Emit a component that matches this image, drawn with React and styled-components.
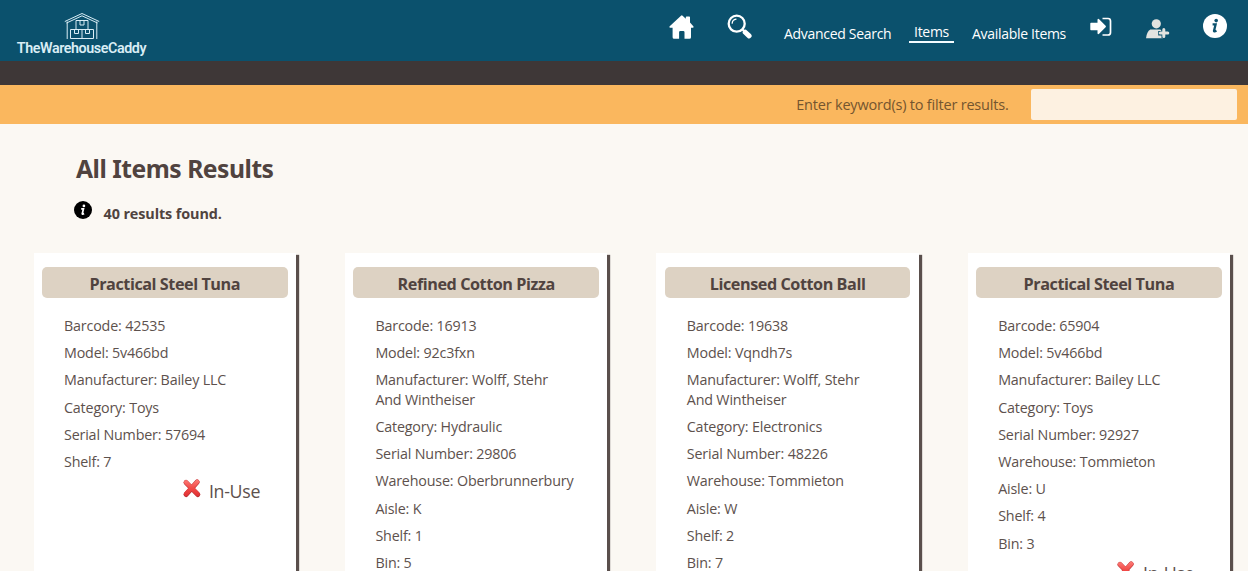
import React from "react";
import styled, { createGlobalStyle } from "styled-components";

const Global = createGlobalStyle`
  * { box-sizing: border-box; }
  html, body { margin: 0; height: 100%; overflow: hidden; }
  body {
    background: #fbf8f3;
    color: #50433f;
    font-family: "Open Sans", "Noto Sans", sans-serif;
  }
  #root { height: 100%; }
  svg { display: block; flex: none; }
`;

const Page = styled.div`
  height: 100%;
  overflow: hidden;
`;

const Header = styled.header`
  display: flex;
  justify-content: space-between;
  height: 61px;
  padding-left: 16.5px;
  background: #0b516d;
  color: #fff;
`;

const Logo = styled.a`
  display: flex;
  flex-direction: column;
  align-items: center;
  width: 130px;
  padding-top: 12px;
  color: #d9edf5;
`;

const LogoText = styled.span`
  font: 600 14.3px/17px Roboto, sans-serif;
  letter-spacing: -0.42px;
  white-space: nowrap;
`;

const Nav = styled.nav`
  display: flex;
  align-items: flex-start;
`;

const IconLink = styled.a`
  display: flex;
  margin: ${(p) => p.$top}px ${(p) => p.$right}px 0 0;
  color: ${(p) => (p.$muted ? "#e3e3e0" : "#fff")};
`;

const NavLink = styled.a`
  width: ${(p) => p.$width}px;
  height: 21px;
  margin: ${(p) => (p.$active ? 22 : 24)}px ${(p) => p.$right}px 0 0;
  border-bottom: ${(p) => (p.$active ? "2px solid #f4fbff" : "0")};
  font-size: 14px;
  line-height: 19px;
  letter-spacing: -0.3px;
  text-align: center;
  white-space: nowrap;
`;

const DarkBar = styled.div`
  height: 24px;
  background: #3e3737;
`;

const FilterBar = styled.div`
  display: flex;
  align-items: center;
  justify-content: flex-end;
  height: 39px;
  padding-right: 11px;
  background: #fab75e;
`;

const FilterLabel = styled.label`
  margin-right: 22.5px;
  color: #74552f;
  font-size: 14.5px;
  line-height: 20px;
  letter-spacing: -0.2px;
`;

const FilterInput = styled.input`
  width: 206px;
  height: 31px;
  border: 0;
  border-radius: 2px;
  background: #fdf1e1;
`;

const Title = styled.h1`
  margin: 28px 0 0 76px;
  font: 700 24.7px/34px "Noto Sans", sans-serif;
  letter-spacing: -0.5px;
`;

const Summary = styled.div`
  display: flex;
  align-items: flex-start;
  height: 67px;
  margin-left: 74px;
  padding-top: 15px;
`;

const Count = styled.p`
  margin: 3px 0 0 11.500px;
  font: 700 14.4px/20px "Open Sans", sans-serif;
  letter-spacing: -0.1px;
`;

const Grid = styled.main`
  display: grid;
  grid-template-columns: repeat(4, 262.4px);
  column-gap: 49px;
  padding-left: 33.6px;
`;

const Card = styled.article`
  height: 400px;
  padding: 14px 8.4px 0;
  background: #fff;
  box-shadow: 3px 2px 1px #5a4f4c;
`;

const CardTitle = styled.h2`
  height: 31px;
  margin: 0 0 18px;
  border-radius: 5px;
  background: #ddd2c3;
  font: 700 16.2px/34px "Open Sans", sans-serif;
  letter-spacing: -0.44px;
  text-align: center;
`;

const Field = styled.p`
  margin: 0 10px 7.65px 22px;
  color: #5d514d;
  font-size: 14.3px;
  line-height: 19.55px;
  letter-spacing: -0.17px;
  white-space: pre-line;
`;

const Status = styled.div`
  display: flex;
  justify-content: flex-end;
  gap: 7px;
  margin: -1px 27.5px 0 0;
  color: #5d514d;
  font-size: 17.8px;
  line-height: 26px;
  letter-spacing: -0.3px;
`;

const Warehouse = () => (
  <svg width="36" height="28" viewBox="0 0 36 28" fill="none" stroke="currentColor">
    <path d="M3.200 27V9.500M32.800 27V9.500M.8 9.500 18 1.500l17.200 8M2.500 11 18 3.800 33.500 11" />
    <path d="M12 17.500v-9h12v9M6.500 26.500v-9h23v9zM18 17.500v9M16 8.500v4.500h4V8.500M10.500 17.500v4h4v-4M21.500 17.500v4h4v-4" />
  </svg>
);

const Home = () => (
  <svg width="25" height="24" viewBox="0 0 25 24" fill="currentColor">
    <path d="M12 .7q.8-.7 1.600 0l3.200 3V2.300q0-.8.8-.8h2.600q.8 0 .8.800v5.300l3.300 3.600q.9 1.300-.6 1.600H22v9.400q0 1.500-1.500 1.500h-5v-6.500q0-1.200-1.200-1.200h-3q-1.200 0-1.200 1.200v6.500h-5q-1.500 0-1.500-1.500v-9.400H1.300q-1.500-.3-.6-1.600z" />
  </svg>
);

const Search = () => (
  <svg width="25" height="25" viewBox="0 0 25 25" fill="none" stroke="currentColor" strokeLinecap="round">
    <circle cx="9.700" cy="9.700" r="8" strokeWidth="2.300" />
    <path d="M5.200 9.200a4.500 4.500 0 0 1 3.800-4" strokeWidth="1.300" />
    <path d="m15.500 15.500 2 2" strokeWidth="2" />
    <path d="m18.200 18.200 3.900 3.700" strokeWidth="5" />
  </svg>
);

const SignIn = () => (
  <svg width="22" height="20" viewBox="0 0 22 20" fill="currentColor">
    <path d="M1 5.800H7.500V2.800q.3-1.500 1.600-.6l6.500 6.500q.8.800 0 1.600L9.100 16.800q-1.300.9-1.600-.6V13.200H1Q.3 13.200.3 12.500v-6Q.3 5.800 1 5.800Z" />
    <path d="M12.500 1.500H18q2.500 0 2.500 2.500v11.500q0 2.500-2.500 2.500h-5.500" fill="none" stroke="currentColor" strokeWidth="1.700" />
  </svg>
);

const AddUser = () => (
  <svg width="24" height="20" viewBox="0 0 24 20">
    <circle cx="10.300" cy="4.800" r="4.600" fill="currentColor" />
    <path d="M0 19.300q.8-6.800 4.300-8.800h10q2.200 1.500 2.700 4v4.800z" fill="currentColor" />
    <path d="M17.800 8.600v10.700M12.200 14.200h10.600" stroke="#0b516d" strokeWidth="4.600" />
    <path d="M17.800 10.600v7M14.300 14.100h7.500" stroke="currentColor" strokeWidth="3" strokeLinecap="round" />
  </svg>
);

const Info = ({ size, fill, ink }) => (
  <svg width={size} height={size} viewBox="0 0 24 24">
    <circle cx="12" cy="12" r="12" fill={fill} />
    <circle cx="13.200" cy="6.600" r="1.800" fill={ink} />
    <path d="M9.600 10.400h3l-1.600 6.600q0 .9 2.500-.2" stroke={ink} strokeWidth="2.300" fill="none" />
  </svg>
);

const Cross = () => (
  <svg width="20" height="21" viewBox="0 0 20 21" fill="none" strokeLinecap="round">
    <defs>
      <linearGradient id="crossRed" x1="0" y1="0" x2="0" y2="20" gradientUnits="userSpaceOnUse">
        <stop offset="0" stopColor="#ff8580" />
        <stop offset=".5" stopColor="#f24b48" />
        <stop offset="1" stopColor="#dd2b2f" />
      </linearGradient>
    </defs>
    <path d="M4 4.500 15.800 16.500M15.200 4 4 16.500" stroke="#b92f33" strokeWidth="5" />
    <path d="M4 4.200 15.600 16M15.200 3.800 4 16" stroke="url(#crossRed)" strokeWidth="4.200" />
  </svg>
);

const items = [
  {
    name: "Practical Steel Tuna",
    fields: ["Barcode: 42535", "Model: 5v466bd", "Manufacturer: Bailey LLC", "Category: Toys", "Serial Number: 57694", "Shelf: 7"],
  },
  {
    name: "Refined Cotton Pizza",
    fields: ["Barcode: 16913", "Model: 92c3fxn", "Manufacturer: Wolff, Stehr\nAnd Wintheiser", "Category: Hydraulic", "Serial Number: 29806", "Warehouse: Oberbrunnerbury", "Aisle: K", "Shelf: 1", "Bin: 5"],
  },
  {
    name: "Licensed Cotton Ball",
    fields: ["Barcode: 19638", "Model: Vqndh7s", "Manufacturer: Wolff, Stehr\nAnd Wintheiser", "Category: Electronics", "Serial Number: 48226", "Warehouse: Tommieton", "Aisle: W", "Shelf: 2", "Bin: 7"],
  },
  {
    name: "Practical Steel Tuna",
    fields: ["Barcode: 65904", "Model: 5v466bd", "Manufacturer: Bailey LLC", "Category: Toys", "Serial Number: 92927", "Warehouse: Tommieton", "Aisle: U", "Shelf: 4", "Bin: 3"],
  },
];

export default function App() {
  return (
    <Page>
      <Global />
      <Header>
        <Logo>
          <Warehouse />
          <LogoText>TheWarehouseCaddy</LogoText>
        </Logo>
        <Nav>
          <IconLink $top={15} $right={32.5}><Home /></IconLink>
          <IconLink $top={14} $right={32.5}><Search /></IconLink>
          <NavLink $width={107} $right={18}>Advanced Search</NavLink>
          <NavLink $width={45} $right={18} $active>Items</NavLink>
          <NavLink $width={94} $right={24}>Available Items</NavLink>
          <IconLink $top={17} $right={34}><SignIn /></IconLink>
          <IconLink $top={19} $right={33} $muted><AddUser /></IconLink>
          <IconLink $top={14} $right={21}><Info size={24} fill="#fff" ink="#0b516d" /></IconLink>
        </Nav>
      </Header>
      <DarkBar />
      <FilterBar>
        <FilterLabel htmlFor="keywords">Enter keyword(s) to filter results.</FilterLabel>
        <FilterInput id="keywords" />
      </FilterBar>
      <Title>All Items Results</Title>
      <Summary>
        <Info size={18} fill="#000" ink="#fff" />
        <Count>40 results found.</Count>
      </Summary>
      <Grid>
        {items.map((item, i) => (
          <Card key={i}>
            <CardTitle>{item.name}</CardTitle>
            {item.fields.map((field) => <Field key={field}>{field}</Field>)}
            <Status><Cross />In-Use</Status>
          </Card>
        ))}
      </Grid>
    </Page>
  );
}
